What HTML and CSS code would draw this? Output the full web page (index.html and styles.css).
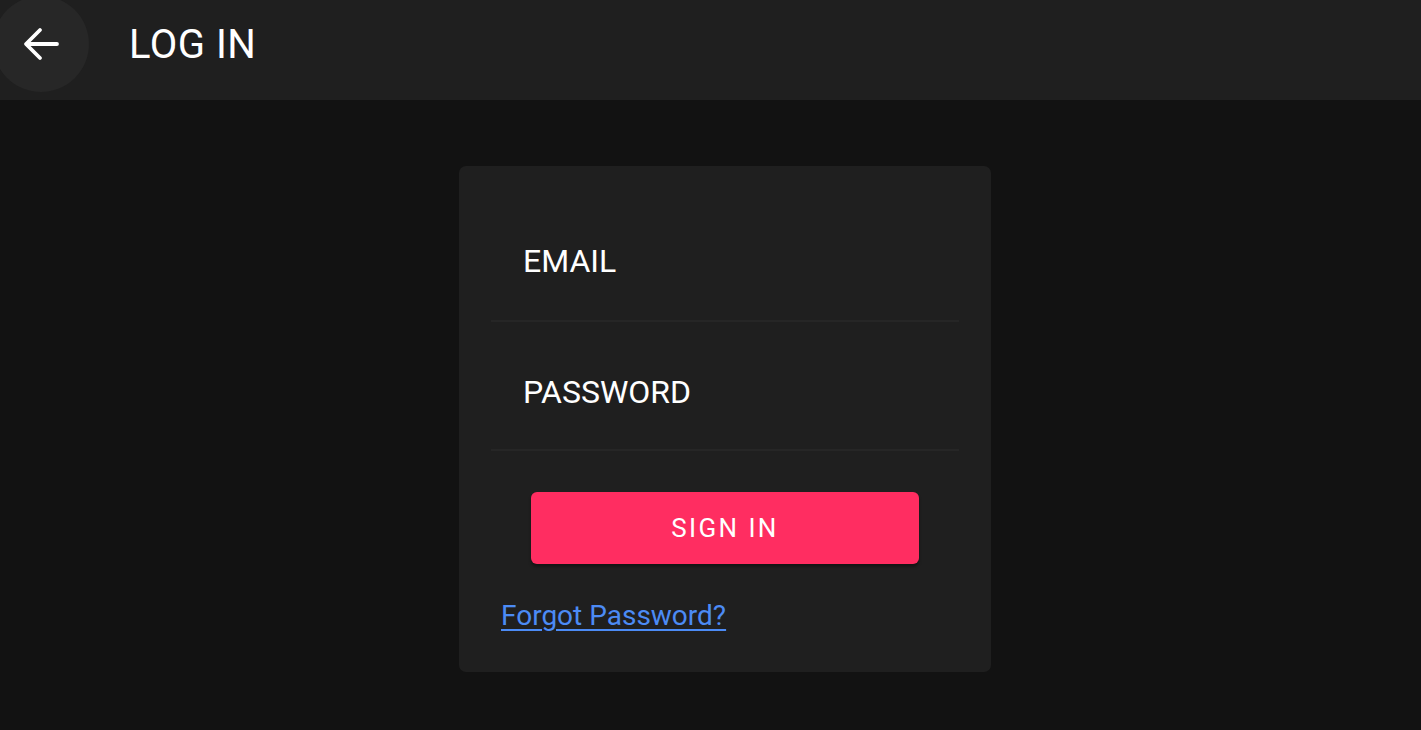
FILE: index.html
```html
<!DOCTYPE html>
<html lang="en">
<head>
<meta charset="utf-8">
<title>Log In</title>
<link rel="stylesheet" href="styles.css">
</head>
<body>
<header class="topbar">
  <button class="back-btn" aria-label="Back">
    <svg class="back-icon" viewBox="0 0 36 34" width="36" height="34">
      <path d="M34 17H4M17 3L3 17l14 14" fill="none" stroke="#ffffff" stroke-width="3.8" stroke-linecap="round" stroke-linejoin="round"/>
    </svg>
  </button>
  <h1 class="title">LOG IN</h1>
</header>
<main class="page">
  <form class="card">
    <div class="field field-email"><span class="field-label">EMAIL</span></div>
    <div class="field field-password"><span class="field-label">PASSWORD</span></div>
    <div class="actions">
      <button type="button" class="signin">SIGN IN</button>
    </div>
    <a class="forgot" href="#">Forgot Password?</a>
  </form>
</main>
</body>
</html>
```

FILE: styles.css
```css
* { box-sizing: border-box; }
html, body {
  margin: 0;
  padding: 0;
  height: 100%;
}
body {
  background: #121212;
  color: #ffffff;
  font-family: Roboto, "Noto Sans", Arial, sans-serif;
  overflow: hidden;
}
.topbar {
  height: 100px;
  background: #1f1f1f;
  display: flex;
  align-items: center;
  overflow: hidden;
}
.back-btn {
  width: 96px;
  height: 96px;
  margin-left: -7px;
  margin-top: -12px;
  border: none;
  border-radius: 50%;
  background: #272727;
  display: flex;
  align-items: center;
  justify-content: center;
  padding: 0;
  flex: none;
}
.back-icon { display: block; }
.title {
  margin: -12px 0 0 40px;
  font-size: 40px;
  font-weight: 400;
  letter-spacing: 0.5px;
  color: #ffffff;
}
.page {
  padding: 66px 0 0 459px;
}
.card {
  width: 532px;
  height: 506px;
  background: #1f1f1f;
  border-radius: 7px;
  padding: 32px 32px 0;
  display: flex;
  flex-direction: column;
}
.field {
  border-bottom: 2px solid #262626;
  display: flex;
  align-items: flex-end;
  padding-left: 32px;
}
.field-email {
  height: 124px;
  padding-bottom: 40px;
}
.field-password {
  height: 129px;
  padding-bottom: 38px;
}
.field-label {
  font-size: 32px;
  line-height: 1.172;
  color: #ffffff;
}
.actions {
  display: flex;
  justify-content: center;
  margin-top: 41px;
}
.signin {
  width: 388px;
  height: 72px;
  border: none;
  border-radius: 6px;
  background: #ff2d61;
  color: #ffffff;
  font-family: Roboto, "Noto Sans", Arial, sans-serif;
  font-size: 26px;
  font-weight: 400;
  letter-spacing: 2.4px;
  box-shadow: 0 3px 3px rgba(0,0,0,0.35);
}
.forgot {
  margin-top: 35px;
  margin-left: 10px;
  align-self: flex-start;
  font-size: 28px;
  color: #4c8bf5;
  text-decoration: underline;
  text-underline-offset: 4px;
}
```
